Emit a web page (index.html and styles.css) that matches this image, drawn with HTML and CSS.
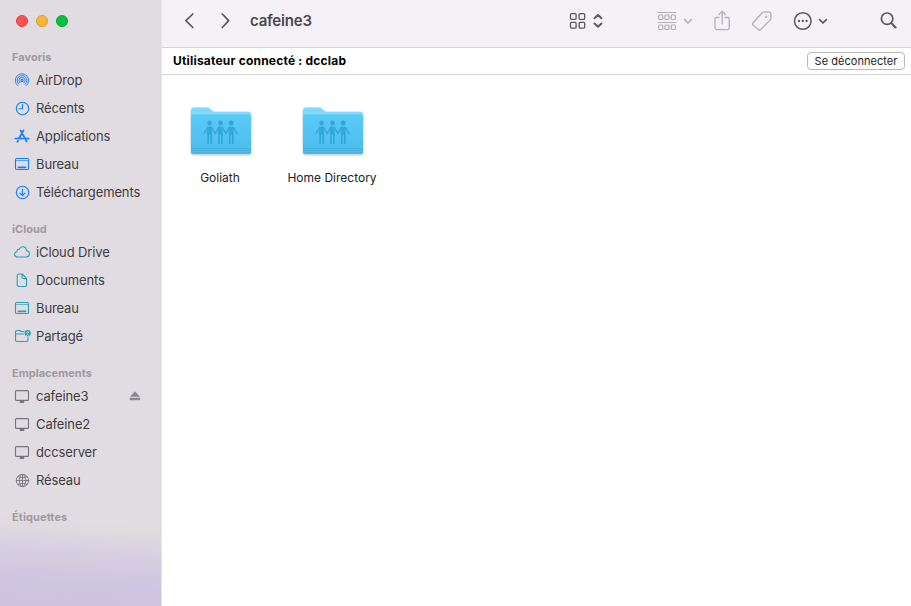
FILE: index.html
```html
<!DOCTYPE html>
<html lang="fr">
<head>
<meta charset="utf-8">
<title>cafeine3</title>
<link rel="stylesheet" href="styles.css">
</head>
<body>
<svg class="defs" aria-hidden="true">
  <defs>
    <linearGradient id="front" x1="0" y1="0" x2="0" y2="1"><stop offset="0" stop-color="#5acaf8"/><stop offset="1" stop-color="#4abced"/></linearGradient>
    <symbol id="desktop" viewBox="0 0 16 16"><rect x="1.5" y="2.5" width="13" height="11" rx="1.3"/><path d="M2 4.500h12" opacity=".65"/><path d="M4.500 11.300h7" stroke-width="1.800"/></symbol>
    <symbol id="display" viewBox="0 0 16 16"><rect x="1.500" y="2.600" width="13" height="9.800" rx="1"/><path d="M6.500 14h3" stroke-width="1.800"/></symbol>
    <symbol id="down" viewBox="0 0 12 24"><path d="M2.600 10.600 6 14l3.400-3.400"/></symbol>
    <symbol id="folder" viewBox="0 0 64 52">
      <path d="M2 4.500q0-3 3-3h13q1.700 0 3 1.300l2 2q1 .9 2.500.9H59q3 0 3 3V20H2z" fill="#80d8fb"/>
      <path d="M2 11q0-2.500 2.500-2.500h55Q62 8.500 62 11v34.500q0 2.500-2.500 2.500h-55Q2 48 2 45.500z" fill="url(#front)"/>
      <path d="M2 42.500h60M2 44.500h60M2 46.500h60" stroke="#3bacdc" stroke-width=".7" opacity=".7"/>
      <g fill="#31a8dc" stroke="#31a8dc" stroke-linecap="round" stroke-linejoin="round">
        <g stroke="none"><circle cx="20.700" cy="17" r="2.400"/><circle cx="31.500" cy="17" r="2.400"/><circle cx="42.300" cy="17" r="2.400"/></g>
        <path d="M19 21h3.400v7H19zM29.800 21h3.400v7h-3.400zM40.600 21H44v7h-3.400z" stroke-width="1"/>
        <path d="M19.200 28v9.500M22.200 28v9.500M30 28v9.500M33 28v9.500M40.800 28v9.500M43.800 28v9.500" stroke-width="1.700"/>
        <path d="M15 27.500l3.700-6M22.700 21.500l3.400 6 3.400-6M33.500 21.500l3.400 6 3.400-6M44.300 21.500l3.700 6" stroke-width="1.400" fill="none"/>
      </g>
    </symbol>
  </defs>
</svg>
<div class="window">
  <aside class="sidebar">
    <div class="lights"><i class="light close"></i><i class="light minimize"></i><i class="light zoom"></i></div>
    <nav class="groups">
      <section class="group blue">
        <h2>Favoris</h2>
        <div class="row"><svg viewBox="0 0 16 16"><g stroke-width=".9"><path d="M3.700 13.600a6.700 6.700 0 1 1 8.600 0M4.900 12.200a4.900 4.900 0 1 1 6.200 0M6 10.800a3.100 3.100 0 1 1 4 0"/></g><circle cx="8" cy="8.500" r="1.100"/></svg><span>AirDrop</span></div>
        <div class="row"><svg viewBox="0 0 16 16"><circle cx="8.500" cy="8.500" r="6.200"/><path d="M8.500 4.500v4.200H5"/></svg><span>Récents</span></div>
        <div class="row"><svg viewBox="0 0 16 16"><path d="M6.600 2.300 12.700 13.600M9.500 2.300 5 10.500M1.300 10.500h8M12 10.500h2.700M4 12.800l-.7 1" stroke-width="1.700"/></svg><span>Applications</span></div>
        <div class="row"><svg><use href="#desktop"/></svg><span>Bureau</span></div>
        <div class="row"><svg viewBox="0 0 16 16"><circle cx="8.500" cy="8.500" r="6.200"/><path d="M8.500 5v6.500M6 9.200l2.500 2.500L11 9.200"/></svg><span>Téléchargements</span></div>
      </section>
      <section class="group teal">
        <h2>iCloud</h2>
        <div class="row"><svg viewBox="0 0 16 16"><path d="M3.800 13C1.700 13 .5 11.900.5 10.300c0-1.500 1-2.500 2.400-2.600C3 5.900 4 5 5.300 5.100 6.100 3.500 7.200 2.800 8.600 2.800c2.200 0 3.800 1.700 3.900 3.900 1.800.2 2.900 1.400 2.900 3.100 0 1.900-1.300 3.200-3.200 3.200z"/></svg><span>iCloud Drive</span></div>
        <div class="row"><svg viewBox="0 0 16 16"><path d="M4.500 2h3.700l4.300 4.400v6.700q0 1.400-1.400 1.400H4.500q-1.300 0-1.300-1.400V3.400Q3.200 2 4.500 2zM8 2v3.300q0 1.200 1.200 1.200h3.300"/></svg><span>Documents</span></div>
        <div class="row"><svg><use href="#desktop"/></svg><span>Bureau</span></div>
        <div class="row"><svg class="shared" viewBox="0 0 17 16"><path d="M10 3.500H7.200L6 2.500H3q-1.500 0-1.500 1.500v8q0 1.500 1.500 1.500h9.500q1.500 0 1.500-1.500V9.500M1.500 6h8"/><circle cx="13.700" cy="5.200" r="3.100" class="solid"/><circle cx="13.700" cy="4.300" r=".8" class="cut"/><path d="M12.300 7.400q1.400-1.800 2.800 0" class="cut"/></svg><span>Partagé</span></div>
      </section>
      <section class="group gray">
        <h2>Emplacements</h2>
        <div class="row"><svg><use href="#display"/></svg><span>cafeine3</span><svg class="eject" viewBox="0 0 12 10"><path d="M6 .2 11 5.700H1zM.8 6.800h10.400v2.500H.8z"/></svg></div>
        <div class="row"><svg><use href="#display"/></svg><span>Cafeine2</span></div>
        <div class="row"><svg><use href="#display"/></svg><span>dccserver</span></div>
        <div class="row"><svg viewBox="0 0 16 16"><g stroke-width=".9"><circle cx="8.500" cy="8.500" r="6.200"/><path d="M8.500 2.500v12M2.500 8.500h12M4 4.700q4.500 2.500 9 0M4 12.300q4.500-2.500 9 0M7.300 2.700q-4.500 5.800 0 11.600M9.700 2.700q4.500 5.800 0 11.600"/></g></svg><span>Réseau</span></div>
      </section>
      <section class="group gray"><h2 class="tags">Étiquettes</h2></section>
    </nav>
  </aside>
  <main class="main">
    <header class="toolbar">
      <svg class="back" width="12" height="24" viewBox="0 0 12 24"><path d="M8.800 5 1.900 11.700l6.900 6.800"/></svg>
      <svg class="forward" width="12" height="24" viewBox="0 0 12 24"><path d="m2.300 5 6.400 6.700-6.400 6.800"/></svg>
      <h1>cafeine3</h1>
      <svg class="view" width="18" height="24" viewBox="0 0 18 24"><g stroke-width="1.300"><rect x="1.500" y="4.600" width="5.600" height="5.700" rx="1"/><rect x="10.100" y="4.600" width="5.600" height="5.700" rx="1"/><rect x="1.500" y="13.400" width="5.600" height="5.700" rx="1"/><rect x="10.100" y="13.400" width="5.600" height="5.700" rx="1"/></g></svg>
      <svg class="updown" width="12" height="24" viewBox="0 0 12 24"><path d="M2.500 9.300 6 6l3.500 3.300M2.500 14.500 6 17.800l3.500-3.300" stroke-width="1.900"/></svg>
      <svg class="arrange faint" width="20" height="24" viewBox="0 0 20 24"><path d="M1 3.500h18M1 13.500h18" stroke-width="1.100"/><g stroke-width="1.200"><rect x="1.600" y="6" width="4.200" height="4.500" rx=".9"/><rect x="7.900" y="6" width="4.200" height="4.500" rx=".9"/><rect x="14.200" y="6" width="4.200" height="4.500" rx=".9"/><rect x="1.600" y="16" width="4.200" height="4.500" rx=".9"/><rect x="7.900" y="16" width="4.200" height="4.500" rx=".9"/><rect x="14.200" y="16" width="4.200" height="4.500" rx=".9"/></g></svg>
      <svg class="arrange-more faint" width="12" height="24"><use href="#down"/></svg>
      <svg class="share faint" width="18" height="24" viewBox="0 0 18 24"><path d="M6 8.500H3.500Q2 8.500 2 10v9q0 1.600 1.600 1.600h11q1.600 0 1.600-1.600v-9q0-1.500-1.500-1.500h-2.500M9.200 15V2.600M6 5.500l3.200-3.200 3.200 3.200" stroke-width="1.300"/></svg>
      <svg class="tag faint" width="22" height="24" viewBox="0 0 22 24"><path d="m2 14 8.500-9.500q1-1.200 2.500-1.300l4.500-.3q2.300-.1 2.400 2.200v3.800q0 1.500-1.100 2.500L10 20.300q-1.500 1.400-2.900 0l-5-4q-1.200-1-.1-2.300z" stroke-width="1.300"/><circle cx="15.200" cy="7.700" r=".4"/></svg>
      <svg class="more" width="20" height="24" viewBox="0 0 20 24"><circle cx="9.800" cy="12" r="8.300" stroke-width="1.500"/><path d="M6 12h.01M9.800 12h.01M13.600 12h.01" stroke-width="2.300"/></svg>
      <svg class="more-menu" width="12" height="24"><use href="#down"/></svg>
      <svg class="search" width="18" height="24" viewBox="0 0 18 24"><circle cx="7.100" cy="9.700" r="5.700"/><path d="m11.400 14.100 4.200 4.400" stroke-width="2"/></svg>
    </header>
    <div class="status"><strong>Utilisateur connecté : dcclab</strong><button>Se déconnecter</button></div>
    <div class="files">
      <figure><svg width="64" height="52"><use href="#folder"/></svg><figcaption>Goliath</figcaption></figure>
      <figure><svg width="64" height="52"><use href="#folder"/></svg><figcaption class="home">Home Directory</figcaption></figure>
    </div>
  </main>
</div>
</body>
</html>
```
FILE: styles.css
```css
* { box-sizing: border-box; }
body { margin: 0; font-family: Inter, "Liberation Sans", sans-serif; font-size: 13px; background: #fff; }
.defs { position: absolute; width: 0; height: 0; }
h1, h2, figure { margin: 0; }
svg { display: block; flex: none; }
.window { display: flex; width: 911px; height: 606px; overflow: hidden; }

.sidebar {
  flex: none;
  width: 162px;
  border-right: 1px solid #e8e3ea;
  background: linear-gradient(184deg, #e1dce2 0, #e1dce2 524px, #dfdae0 535px, #d5cde0 560px, #cec5e0 590px, #ccc2e1 612px);
}
.lights { display: flex; gap: 8px; padding: 15px 0 0 16px; height: 48px; }
.light { width: 12px; height: 12px; border-radius: 50%; border: 1px solid; }
.close { background: #ff5351; border-color: #e2403f; }
.minimize { background: #fdb43a; border-color: #df9a31; }
.zoom { background: #03c041; border-color: #05a838; }
.groups { display: flex; flex-direction: column; gap: 14px; }
.group h2 { height: 18px; padding-left: 12px; line-height: 18px; font-size: 11px; font-weight: 700; color: #9e999f; letter-spacing: .02px; }
.group .tags { letter-spacing: .1px; }
.row { display: flex; align-items: center; height: 28px; padding: 0 20px 0 14px; color: #3f3c40; line-height: 28px; letter-spacing: -.12px; }
.row span { margin-left: 6px; }
.row svg { width: 16px; height: 16px; fill: none; stroke: currentColor; stroke-width: 1.1; stroke-linecap: round; stroke-linejoin: round; }
.row svg.shared { width: 17px; margin-right: -1px; }
.blue svg { color: #147bfa; }
.teal svg { color: #2a9dbb; }
.gray svg { color: #77737a; }
.shared .solid { fill: currentColor; stroke: none; }
.shared .cut { stroke: #e1dce2; stroke-width: .8; }
.row svg.eject { width: 12px; height: 10px; margin-left: auto; fill: #8d8890; stroke: none; }

.main { flex: 1; min-width: 0; }
.toolbar { display: flex; align-items: flex-start; height: 48px; padding: 9px 0 0 22px; background: #f6f0f7; border-bottom: 1px solid #d7d2d8; color: #5c585d; }
.toolbar svg { fill: none; stroke: currentColor; stroke-width: 1.7; stroke-linecap: round; stroke-linejoin: round; }
.toolbar .faint { color: #b5b0b6; }
.toolbar h1 { width: 319px; margin-left: 18px; line-height: 24px; font-size: 15px; font-weight: 600; letter-spacing: -.2px; color: #4c494d; }
.forward { margin-left: 24px; }
.view { margin-right: 5px; }
.arrange { margin-left: 53px; }
.arrange-more { margin-left: 5px; }
.share { margin-left: 19px; }
.tag { margin-left: 20px; }
.more { margin-left: 20px; }
.more-menu { margin-left: 4px; }
.search { margin-left: 51px; }

.status { display: flex; align-items: center; justify-content: space-between; height: 27px; padding: 0 6px 0 11px; border-bottom: 1px solid #d4d4d4; color: #000; }
.status strong { padding-bottom: 2px; font-size: 12px; font-weight: 700; letter-spacing: .2px; }
.status button { width: 98px; height: 18px; padding: 0; border: 1px solid #b9b9b9; border-radius: 4px; background: #fff; color: #222; font: 11px/16px Inter, sans-serif; letter-spacing: .03px; white-space: nowrap; }
.files { display: flex; padding: 31px 0 0 2px; }
.files figure { display: flex; flex-direction: column; align-items: center; width: 112px; }
.files svg { margin-left: 2px; filter: drop-shadow(0 1px 1px rgb(0 0 0 / .28)); }
.files figcaption { margin-top: 12px; line-height: 16px; font-size: 12px; color: #222; white-space: nowrap; }
```
